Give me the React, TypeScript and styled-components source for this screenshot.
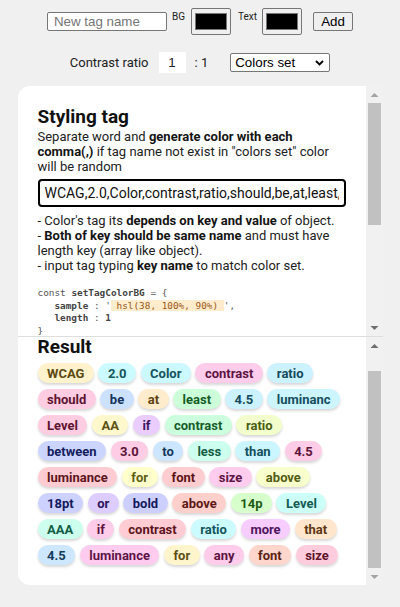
import React, { useEffect, useRef } from "react";
import styled, { createGlobalStyle } from "styled-components";

const Global = createGlobalStyle`
  html, body { margin: 0; padding: 0; background: #f0f0f0; }
  body { font-family: Roboto, "Liberation Sans", Arial, sans-serif; color: #222; }
  * { box-sizing: border-box; }
`;

const Page = styled.div`
  width: 400px;
  height: 607px;
  padding-top: 8px;
  display: flex;
  flex-direction: column;
  align-items: center;
`;

const Toolbar = styled.div`
  display: flex;
  align-items: center;
  height: 27px;
`;

const TextInput = styled.input`
  width: 120px;
  height: 19px;
  padding: 1px 6px;
  border: 1px solid #767676;
  border-radius: 2px;
  background: #fff;
  font: 13.33px "Liberation Sans", Arial, sans-serif;
  color: #000;
  margin-right: 5px;
  &::placeholder { color: #757575; }
`;

const SmallLabel = styled.span<{ $ml?: number; $mr?: number }>`
  align-self: flex-start;
  margin-top: 3px;
  margin-left: ${(p) => p.$ml ?? 0}px;
  margin-right: ${(p) => p.$mr ?? 0}px;
  font-size: 10px;
  line-height: 12px;
  color: #222;
`;

const ColorInput = styled.input`
  width: 40px;
  height: 27px;
  padding: 0;
  border: 1px solid #767676;
  border-radius: 2px;
  background: #efefef;
  -webkit-appearance: none;
  &::-webkit-color-swatch-wrapper { padding: 4px 3px; }
  &::-webkit-color-swatch { border: 1px solid #777; border-radius: 0; }
`;

const Button = styled.button`
  margin-left: 11px;
  width: 40px;
  height: 19px;
  padding: 0;
  border: 1px solid #767676;
  border-radius: 2px;
  background: #efefef;
  font: 13.33px "Liberation Sans", Arial, sans-serif;
  color: #000;
`;

const RatioRow = styled.div`
  display: flex;
  align-items: center;
  margin-top: 17px;
  height: 21px;
  font-size: 13px;
  color: #222;
`;

const NumberBox = styled.input`
  width: 27px;
  height: 21px;
  margin: 0 9px 0 10px;
  border: none;
  background: #fff;
  text-align: center;
  font: 13.33px "Liberation Sans", Arial, sans-serif;
  color: #222;
  padding: 0;
`;

const SelectWrap = styled.div`
  position: relative;
  margin-left: 22px;
  width: 100px;
  height: 19px;
`;

const Select = styled.select`
  appearance: none;
  -webkit-appearance: none;
  width: 100%;
  height: 100%;
  border: 1px solid #767676;
  border-radius: 2px;
  background: #fff;
  padding: 0 0 0 4px;
  font: 13.33px "Liberation Sans", Arial, sans-serif;
  color: #000;
`;

const Chevron = styled.svg`
  position: absolute;
  right: 6px;
  top: 7px;
  pointer-events: none;
`;

const Card = styled.div`
  margin-top: 13px;
  width: 365px;
  height: 499px;
  display: flex;
  flex-direction: column;
`;

const Section = styled.div<{ $top?: boolean }>`
  display: flex;
  flex: none;
  height: ${(p) => (p.$top ? 250 : 249)}px;
  border-top: ${(p) => (p.$top ? "none" : "1px solid #dedede")};
`;

const Content = styled.div<{ $top?: boolean }>`
  flex: 1;
  min-width: 0;
  overflow: hidden;
  background: #fff;
  padding: ${(p) => (p.$top ? "19px 20px 20px" : "20px")};
  border-radius: ${(p) => (p.$top ? "12px 0 0 0" : "0 0 0 12px")};
`;

const ScrollBar = styled.div`
  width: 17px;
  flex: none;
  display: flex;
  flex-direction: column;
  background: #f1f1f1;
`;

const ScrollTrack = styled.div<{ $end?: boolean }>`
  flex: 1;
  display: flex;
  flex-direction: column;
  justify-content: ${(p) => (p.$end ? "flex-end" : "flex-start")};
  padding: 0 2px;
`;

const Thumb = styled.div<{ $size: number }>`
  height: ${(p) => p.$size}px;
  background: #c1c1c1;
`;

const Arrow = ({ up, dim }: { up?: boolean; dim?: boolean }) => (
  <svg width="17" height="17" viewBox="0 0 17 17" style={{ display: "block", flex: "none" }}>
    <path
      d={up ? "M4.5 11 L8.5 7 L12.5 11 Z" : "M4.5 7 L8.5 11 L12.5 7 Z"}
      fill={dim ? "#a3a3a3" : "#6e6e6e"}
    />
  </svg>
);

const Heading = styled.h2<{ $mb?: number }>`
  margin: 0 0 ${(p) => p.$mb ?? 0}px;
  font-size: 19px;
  line-height: 23px;
  font-weight: 700;
  color: #111;
`;

const Para = styled.p<{ $mt?: number }>`
  margin: ${(p) => p.$mt ?? 0}px 0 0;
  font-size: 13px;
  line-height: 15px;
  color: #222;
  b { font-weight: 700; color: #141414; }
`;

const TagsInput = styled.input`
  display: block;
  width: 100%;
  height: 28px;
  margin: 5px 0 6px;
  border: 2px solid #000;
  border-radius: 4px;
  padding: 0 5px;
  font: 14px Roboto, "Liberation Sans", Arial, sans-serif;
  color: #111;
  background: #fff;
`;

const Code = styled.pre<{ $mt?: number }>`
  margin: ${(p) => p.$mt ?? 14}px 0 0;
  font-family: "DejaVu Sans Mono", "Liberation Mono", monospace;
  font-size: 9.4px;
  line-height: 12.7px;
  color: #555;
  b { font-weight: 700; color: #444; }
`;

const Hl = styled.span`
  background: hsl(38, 100%, 90%);
  color: hsl(30, 70%, 35%);
`;

const TagList = styled.div`
  display: flex;
  flex-wrap: wrap;
  gap: 6px 4.5px;
`;

const Tag = styled.span<{ $h: number }>`
  display: inline-flex;
  align-items: center;
  height: 20px;
  padding: 0 9.5px;
  border-radius: 10px;
  font-size: 13px;
  font-weight: 700;
  background: hsl(${(p) => p.$h}, 100%, 90%);
  color: hsl(${(p) => p.$h}, 65%, 22%);
  box-shadow: 0 2px 3px rgba(0, 0, 0, 0.16);
  white-space: nowrap;
`;

const tags: [string, number][] = [
  ["WCAG", 45], ["2.0", 185], ["Color", 188], ["contrast", 322], ["ratio", 195],
  ["should", 335], ["be", 215], ["at", 38], ["least", 135], ["4.5", 195], ["luminanc", 192],
  ["Level", 335], ["AA", 52], ["if", 275], ["contrast", 140], ["ratio", 75],
  ["between", 230], ["3.0", 330], ["to", 210], ["less", 160], ["than", 190], ["4.5", 328],
  ["luminance", 352], ["for", 60], ["font", 356], ["size", 320], ["above", 68],
  ["18pt", 234], ["or", 260], ["bold", 236], ["above", 3], ["14p", 108], ["Level", 172],
  ["AAA", 160], ["if", 325], ["contrast", 350], ["ratio", 185], ["more", 290], ["that", 30],
  ["4.5", 208], ["luminance", 318], ["for", 48], ["any", 322], ["font", 12], ["size", 340],
];

export default function App() {
  const bottomRef = useRef<HTMLDivElement>(null);
  useEffect(() => {
    if (bottomRef.current) bottomRef.current.scrollTop = 23;
  }, []);

  return (
    <>
      <Global />
      <Page>
        <Toolbar>
          <TextInput placeholder="New tag name" />
          <SmallLabel $mr={6}>BG</SmallLabel>
          <ColorInput type="color" defaultValue="#000000" />
          <SmallLabel $ml={7} $mr={5}>Text</SmallLabel>
          <ColorInput type="color" defaultValue="#000000" />
          <Button>Add</Button>
        </Toolbar>
        <RatioRow>
          <span>Contrast ratio</span>
          <NumberBox defaultValue="1" />
          <span>: 1</span>
          <SelectWrap>
            <Select defaultValue="set">
              <option value="set">Colors set</option>
            </Select>
            <Chevron width="9" height="6" viewBox="0 0 9 6">
              <path d="M1 1 L4.5 4.5 L8 1" fill="none" stroke="#000" strokeWidth="1.8" />
            </Chevron>
          </SelectWrap>
        </RatioRow>
        <Card>
          <Section $top>
            <Content $top>
              <Heading>Styling tag</Heading>
              <Para $mt={1}>
                Separate word and <b>generate color with each comma(,)</b> if tag name not exist in
                "colors set" color will be random
              </Para>
              <TagsInput
                readOnly
                value="WCAG,2.0,Color,contrast,ratio,should,be,at,least,4.5,luminance,Level,AA,if,contrast,ratio"
              />
              <Para>
                - Color's tag its <b>depends on key and value</b> of object.
                <br />- <b>Both of key should be same name</b> and must have length key (array like
                object).
                <br />- input tag typing <b>key name</b> to match color set.
              </Para>
              <Code>
                {"const "}
                <b>setTagColorBG</b>
                {" = {\n   "}
                <b>sample</b>
                {" : '"}
                <Hl> hsl(38, 100%, 90%) </Hl>
                {"',\n   "}
                <b>length</b>
                {" : "}
                <b>1</b>
                {"\n}"}
              </Code>
              <Code>
                {"const "}
                <b>setTagColorText</b>
                {" = {\n   "}
                <b>sample</b>
                {" : '"}
                <Hl> hsl(38, 100%, 20%) </Hl>
                {"',\n   "}
                <b>length</b>
                {" : "}
                <b>1</b>
                {"\n}"}
              </Code>
            </Content>
            <ScrollBar>
              <Arrow up dim />
              <ScrollTrack>
                <Thumb $size={122} />
              </ScrollTrack>
              <Arrow />
            </ScrollBar>
          </Section>
          <Section>
            <Content ref={bottomRef}>
              <Heading $mb={5}>Result</Heading>
              <TagList>
                {tags.map(([t, h], i) => (
                  <Tag key={i} $h={h}>
                    {t}
                  </Tag>
                ))}
              </TagList>
            </Content>
            <ScrollBar>
              <Arrow up />
              <ScrollTrack $end>
                <Thumb $size={197} />
              </ScrollTrack>
              <Arrow dim />
            </ScrollBar>
          </Section>
        </Card>
      </Page>
    </>
  );
}
